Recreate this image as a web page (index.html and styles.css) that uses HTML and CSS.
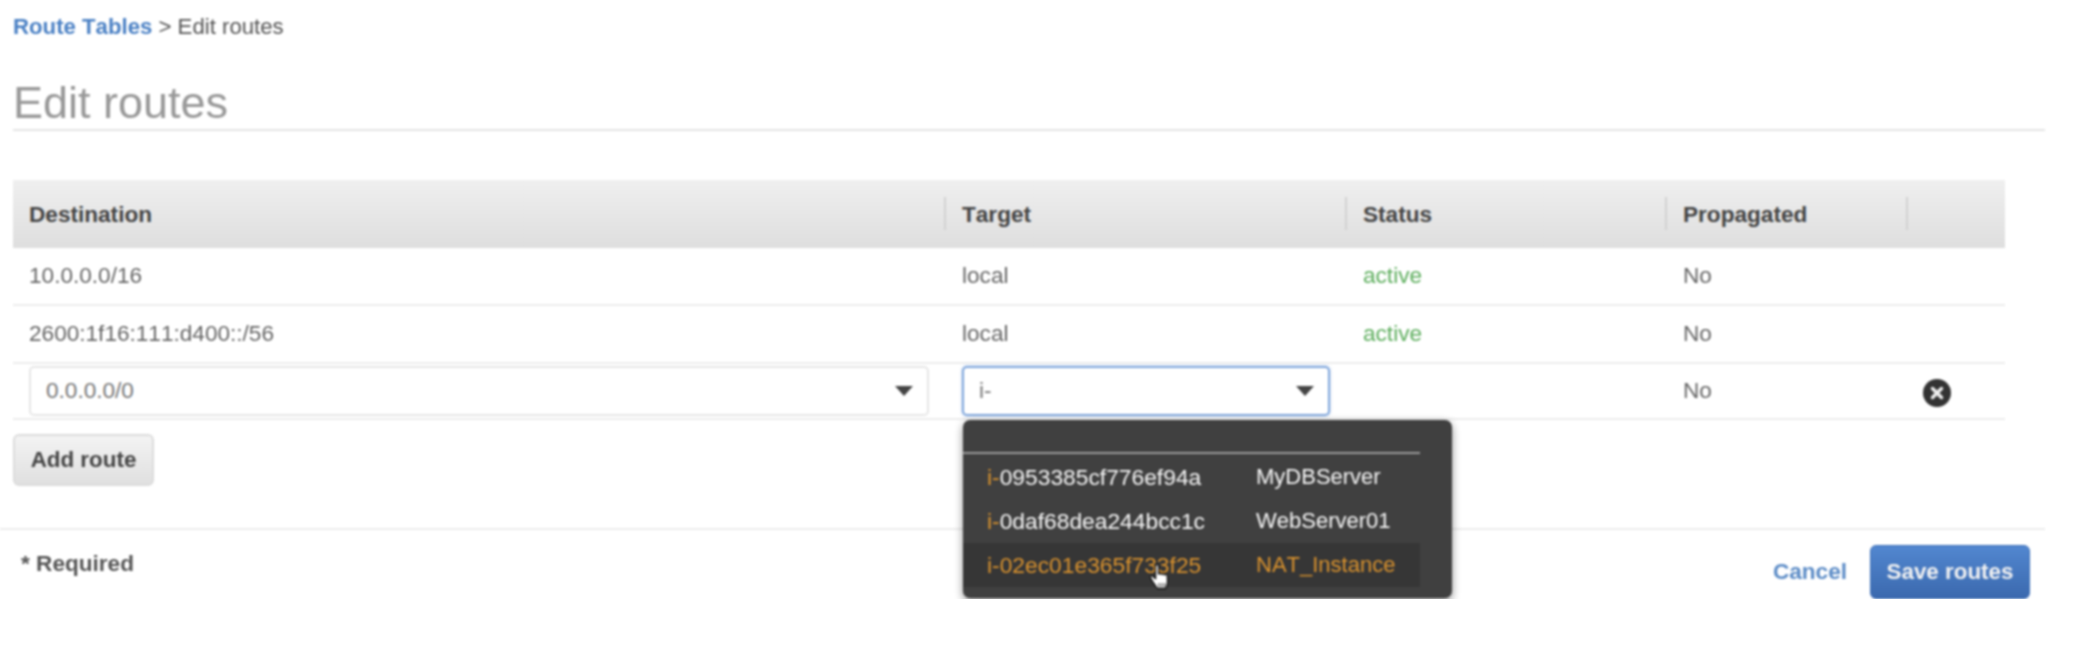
FILE: index.html
```html
<!DOCTYPE html>
<html lang="en">
<head>
  <meta charset="UTF-8">
  <title>Edit routes</title>
  <link rel="stylesheet" href="styles.css">
</head>
<body>
  <div class="page">
    <!-- breadcrumb and title -->
    <div class="breadcrumb"><a href="#">Route Tables</a> &gt; Edit routes</div>
    <h1>Edit routes</h1>

    <!-- routes table -->
    <table class="routes">
      <colgroup>
        <col class="col-dest">
        <col class="col-target">
        <col class="col-status">
        <col class="col-prop">
        <col class="col-action">
      </colgroup>
      <thead>
        <tr>
          <th>Destination</th>
          <th><span class="sep"></span>Target</th>
          <th><span class="sep"></span>Status</th>
          <th><span class="sep"></span>Propagated</th>
          <th><span class="sep"></span></th>
        </tr>
      </thead>
      <tbody>
        <tr>
          <td>10.0.0.0/16</td>
          <td>local</td>
          <td class="active">active</td>
          <td>No</td>
          <td></td>
        </tr>
        <tr>
          <td>2600:1f16:111:d400::/56</td>
          <td>local</td>
          <td class="active">active</td>
          <td>No</td>
          <td></td>
        </tr>
        <tr class="edit-row">
          <td>
            <div class="select dest-select">
              <span>0.0.0.0/0</span>
              <i class="caret"></i>
            </div>
          </td>
          <td>
            <div class="select target-select">
              <span>i-</span>
              <i class="caret"></i>
              <!-- instance suggestions -->
              <div class="dropdown">
                <div class="dropdown-rule"></div>
                <div class="option"><span class="opt-id"><b>i-</b>0953385cf776ef94a</span><span>MyDBServer</span></div>
                <div class="option"><span class="opt-id"><b>i-</b>0daf68dea244bcc1c</span><span>WebServer01</span></div>
                <div class="option hover"><span class="opt-id"><b>i-</b>02ec01e365f733f25</span><span>NAT_Instance</span></div>
                <svg class="hand" viewBox="0 0 20 26" width="22" height="29">
                  <path d="M6 2.500c0-1.600 2.700-1.600 2.700 0V10c0-.9 2.600-1.100 2.700.3 0-1 2.600-1.100 2.700.4.2-.9 2.400-.8 2.500.8l.2 5c0 3-1 4.500-1.600 6.500H7.500C6.500 21 4.800 19 3.200 16.500L1.500 13.400c-.8-1.500 1-2.600 2.200-1.400L6 14.200z" fill="#fff" stroke="#111" stroke-width="1.200" stroke-linejoin="round"/>
                  <path d="M9 18v4M11.500 18v4M14 18v4" stroke="#444" stroke-width="1"/>
                </svg>
              </div>
            </div>
          </td>
          <td></td>
          <td>No</td>
          <td>
            <svg class="remove" viewBox="0 0 28 28" width="28" height="28">
              <circle cx="14" cy="14" r="14" fill="#333"/>
              <path d="M9.500 9.500l9 9M18.500 9.500l-9 9" stroke="#eee" stroke-width="3.500" stroke-linecap="round"/>
            </svg>
          </td>
        </tr>
      </tbody>
    </table>

    <button class="btn add-route">Add route</button>

    <!-- footer -->
    <div class="footer">
      <div class="required">* Required</div>
      <div class="actions">
        <a class="cancel" href="#">Cancel</a>
        <button class="btn save">Save routes</button>
      </div>
    </div>
  </div>
</body>
</html>
```
FILE: styles.css
```css
body {
  margin: 0;
  background-color: #fff;
  font-family: "Liberation Sans", Arial, sans-serif;
  font-size: 22.6px;
  font-kerning: none;
  color: #666;
  overflow: hidden;
}

/* the reference is a soft video frame */
.page {
  width: 2032px;
  padding: 14px 0 0 13px;
  filter: blur(0.9px);
}

.breadcrumb {
  font-size: 22.2px;
  line-height: 26px;
  color: #555;
}

.breadcrumb a {
  color: #4a80c4;
  font-weight: bold;
  text-decoration: none;
}

h1 {
  margin: 37px 0 0;
  font-size: 45px;
  font-weight: normal;
  line-height: 52px;
  color: #999;
  border-bottom: 2px solid #e4e4e4;
}

.routes {
  width: 1992px;
  margin-top: 49px;
  border-collapse: collapse;
  table-layout: fixed;
}

.col-dest { width: 931px; }
.col-target { width: 401px; }
.col-status { width: 320px; }
.col-prop { width: 241px; }
.col-action { width: 99px; }

.routes th {
  position: relative;
  height: 67px;
  padding: 1px 0 0 18px;
  background: linear-gradient(#efefef, #dedede);
  color: #444;
  text-align: left;
}

.routes th:first-child,
.routes td:first-child {
  padding-left: 16px;
}

.sep {
  position: absolute;
  left: 0;
  top: 17px;
  height: 33px;
  border-left: 2px solid #d2d2d2;
}

.routes td {
  height: 56px;
  padding: 0 0 0 18px;
  border-bottom: 2px solid #ececec;
}

.active {
  color: #5cad5c;
}

.edit-row td {
  height: 54px;
}

.select {
  position: relative;
  display: flex;
  justify-content: space-between;
  align-items: center;
  box-sizing: border-box;
  height: 50px;
  padding: 0 14px 0 15px;
  background: #fff;
  border: 2px solid #e6e6e6;
  border-radius: 5px;
  color: #777;
}

.dest-select {
  width: 900px;
}

.target-select {
  width: 368px;
  border-color: #7fa6dc;
  box-shadow: 0 0 3px rgba(90, 140, 210, 0.5);
}

.caret {
  border-left: 9px solid transparent;
  border-right: 9px solid transparent;
  border-top: 10px solid #444;
}

.dropdown {
  position: absolute;
  top: 52px;
  left: -1px;
  z-index: 5;
  box-sizing: border-box;
  width: 489px;
  height: 178px;
  padding: 32px 32px 0 0;
  background: #404040;
  border-radius: 7px;
  box-shadow: 0 3px 8px rgba(0, 0, 0, 0.45);
  font-size: 22px;
  color: #f6f6f6;
}

.dropdown-rule {
  border-top: 2px solid #999;
  margin-bottom: 1px;
}

.option {
  display: flex;
  align-items: center;
  height: 44px;
  padding-left: 24px;
}

.opt-id {
  width: 269px;
  font-size: 22.8px;
}

.opt-id b {
  font-weight: normal;
  color: #d9922e;
}

.option.hover {
  background: #363636;
  color: #d9922e;
}

.hand {
  position: absolute;
  left: 186px;
  top: 143px;
}

.remove {
  display: block;
  margin: 3px 0 0 -1px;
}

.btn {
  font-family: inherit;
  font-size: 22.4px;
  font-weight: bold;
  border-radius: 6px;
  cursor: pointer;
}

.add-route {
  display: block;
  width: 141px;
  height: 52px;
  margin-top: 14px;
  padding: 0;
  background: linear-gradient(#f3f3f3, #e0e0e0);
  border: 2px solid #dcdcdc;
  color: #444;
}

.footer {
  display: flex;
  justify-content: space-between;
  margin: 42px 0 0 -13px;
  padding: 15px 15px 0 21px;
  width: 2009px;
  border-top: 2px solid #ececec;
}

.required {
  margin-top: 6px;
  line-height: 26px;
  font-weight: bold;
  color: #555;
}

.actions {
  display: flex;
  align-items: center;
  gap: 23px;
}

.cancel {
  color: #5b8bc6;
  font-weight: bold;
  text-decoration: none;
}

.save {
  width: 160px;
  height: 54px;
  padding: 0;
  background: linear-gradient(#5287d0, #3b69ae);
  border: 1px solid #3f71b8;
  color: #f2f2f2;
}
```
